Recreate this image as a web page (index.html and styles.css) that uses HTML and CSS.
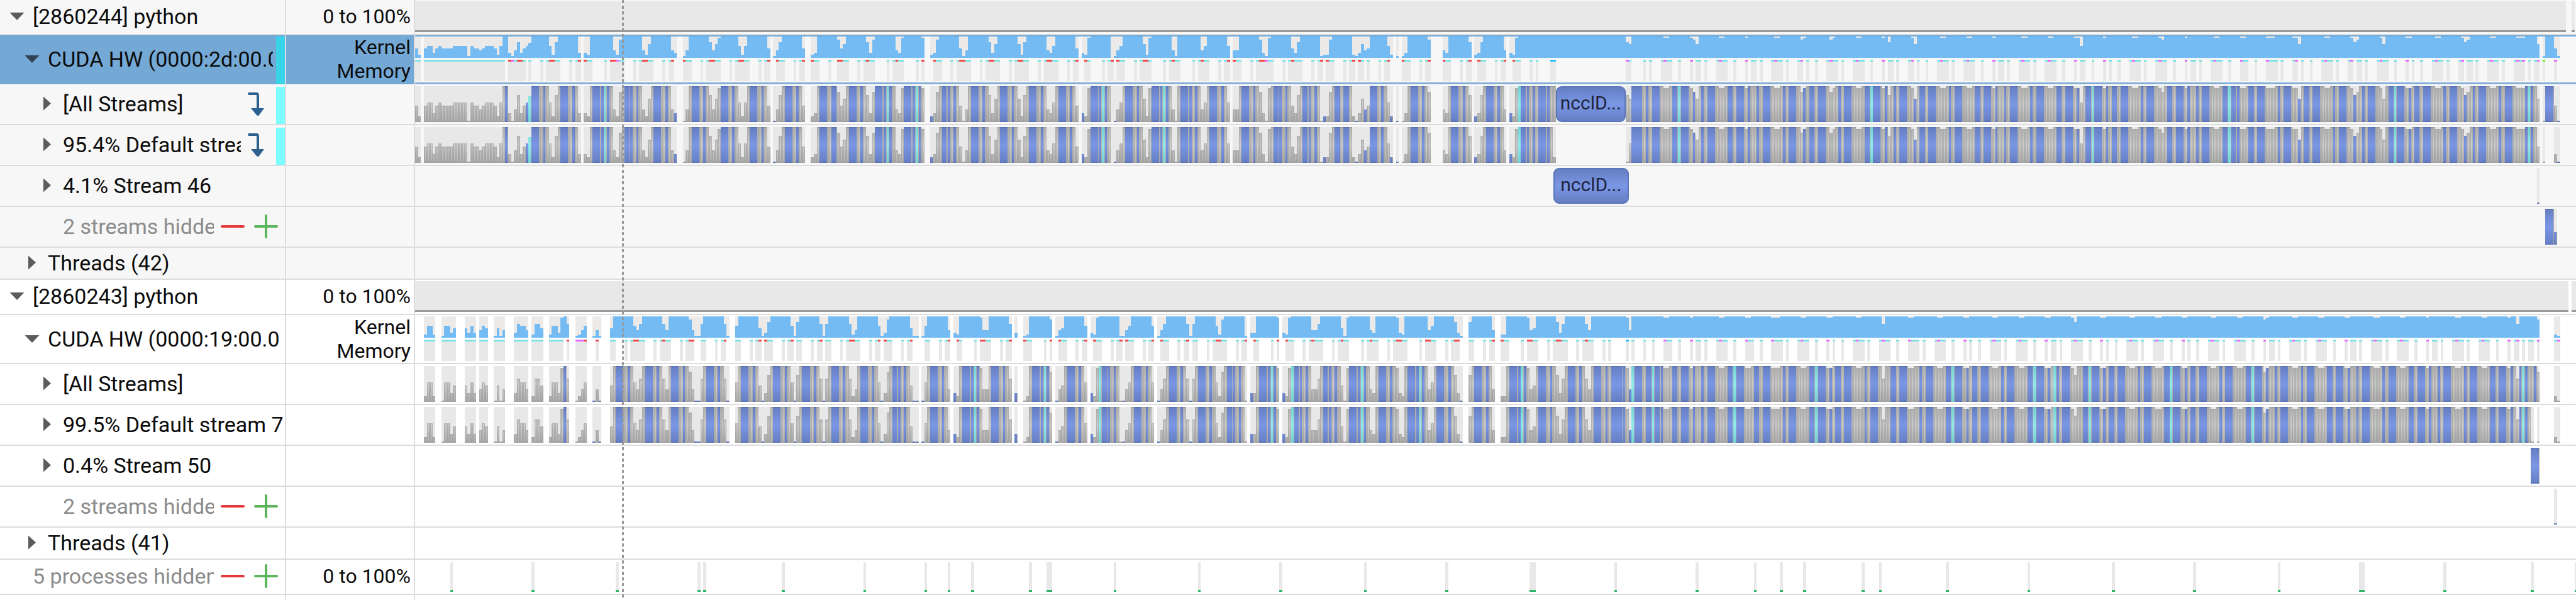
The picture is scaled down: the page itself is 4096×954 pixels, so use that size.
FILE: index.html
```html
<!DOCTYPE html>
<html lang="en">
<head>
<meta charset="utf-8">
<title>Timeline</title>
<link rel="stylesheet" href="styles.css">
</head>
<body>
<svg class="defs" width="0" height="0" aria-hidden="true">
  <defs>
    <linearGradient id="blueFill" gradientUnits="userSpaceOnUse" x1="0" y1="0" x2="0" y2="100">
      <stop offset="0" stop-color="#546eb8"/><stop offset="0.04" stop-color="#6780c4"/><stop offset="0.5" stop-color="#7a97e6"/><stop offset="0.96" stop-color="#6780c4"/><stop offset="1" stop-color="#546eb8"/>
    </linearGradient>
    <linearGradient id="grayFill" gradientUnits="userSpaceOnUse" x1="0" y1="0" x2="0" y2="100">
      <stop offset="0" stop-color="#9c9c9c"/><stop offset="0.04" stop-color="#acacac"/><stop offset="0.5" stop-color="#b4b4b4"/><stop offset="1" stop-color="#a2a2a2"/>
    </linearGradient>
    <linearGradient id="shineFill" gradientUnits="userSpaceOnUse" x1="0" y1="0" x2="0" y2="100">
      <stop offset="0" stop-color="#b0b0ae"/><stop offset="0.5" stop-color="#cdcdcb"/><stop offset="1" stop-color="#b0b0ae"/>
    </linearGradient>
    <linearGradient id="cyanFill" gradientUnits="userSpaceOnUse" x1="0" y1="0" x2="0" y2="100">
      <stop offset="0" stop-color="#72d2d2"/><stop offset="0.5" stop-color="#94eaea"/><stop offset="1" stop-color="#72d2d2"/>
    </linearGradient>
    <symbol id="hook" viewBox="0 0 26 40"><path d="M2 4H14Q16 4 16 7V29" fill="none" stroke="#2b608f" stroke-width="4" stroke-linecap="round"/><path d="M5 27H26L18 38Q16 40 14 38Z" fill="#2b608f"/></symbol>
    <symbol id="minus" viewBox="0 0 38 38"><path d="M2 19H36" stroke="#e5383b" stroke-width="4" stroke-linecap="round"/></symbol>
    <symbol id="plus" viewBox="0 0 38 38"><path d="M2 19H36M19 2V36" stroke="#5bb55b" stroke-width="4" stroke-linecap="round"/></symbol>
  </defs>
</svg>
<main class="timeline">
  <section class="process shaded">
    <div class="row short">
      <div class="name l1"><button class="caret open" aria-label="Collapse process 2860244"></button><span class="label">[2860244] python</span></div>
      <div class="value">0 to 100%</div>
      <div class="lane"><svg data-kind="usage" data-spans="0-739,741-742"></svg></div>
    </div>
    <div class="row tall selected">
      <div class="name l2"><button class="caret open" aria-label="Collapse CUDA HW"></button><span class="label">CUDA HW (0000:2d:00.0</span><span class="mark"></span></div>
      <div class="value">Kernel<br>Memory</div>
      <div class="lane"><svg data-kind="kernel" data-track="a"></svg></div>
    </div>
    <div class="row">
      <div class="name l3"><button class="caret" aria-label="Expand all streams"></button><span class="label">[All Streams]</span><svg class="hook"><use href="#hook"/></svg><span class="mark"></span></div>
      <div class="value"></div>
      <div class="lane"><svg data-kind="bars" data-track="a"></svg><div class="event in-all">ncclD...</div></div>
    </div>
    <div class="row">
      <div class="name l3"><button class="caret" aria-label="Expand default stream"></button><span class="label">95.4% Default stream</span><svg class="hook"><use href="#hook"/></svg><span class="mark"></span></div>
      <div class="value"></div>
      <div class="lane"><svg data-kind="bars" data-track="aDefault"></svg></div>
    </div>
    <div class="row">
      <div class="name l3"><button class="caret" aria-label="Expand stream 46"></button><span class="label">4.1% Stream 46</span></div>
      <div class="value"></div>
      <div class="lane"><svg data-kind="bars" data-track="a46"></svg><div class="event in-stream">ncclD...</div></div>
    </div>
    <div class="row">
      <div class="name l3 hidden-rows"><span class="label">2 streams hidden</span><button class="tool" aria-label="Show fewer"><svg><use href="#minus"/></svg></button><button class="tool" aria-label="Show more"><svg><use href="#plus"/></svg></button></div>
      <div class="value"></div>
      <div class="lane"><svg data-kind="bars" data-track="aHidden"></svg></div>
    </div>
    <div class="row threads">
      <div class="name l2"><button class="caret" aria-label="Expand threads"></button><span class="label">Threads (42)</span></div>
      <div class="value"></div>
      <div class="lane"></div>
    </div>
  </section>
  <section class="process">
    <div class="row short">
      <div class="name l1"><button class="caret open" aria-label="Collapse process 2860243"></button><span class="label">[2860243] python</span></div>
      <div class="value">0 to 100%</div>
      <div class="lane"><svg data-kind="usage" data-spans="0-740,741-743"></svg></div>
    </div>
    <div class="row tall">
      <div class="name l2"><button class="caret open" aria-label="Collapse CUDA HW"></button><span class="label">CUDA HW (0000:19:00.0</span></div>
      <div class="value">Kernel<br>Memory</div>
      <div class="lane"><svg data-kind="kernel" data-track="b"></svg></div>
    </div>
    <div class="row">
      <div class="name l3"><button class="caret" aria-label="Expand all streams"></button><span class="label">[All Streams]</span></div>
      <div class="value"></div>
      <div class="lane"><svg data-kind="bars" data-track="b"></svg></div>
    </div>
    <div class="row">
      <div class="name l3"><button class="caret" aria-label="Expand default stream"></button><span class="label">99.5% Default stream 7</span></div>
      <div class="value"></div>
      <div class="lane"><svg data-kind="bars" data-track="bDefault"></svg></div>
    </div>
    <div class="row">
      <div class="name l3"><button class="caret" aria-label="Expand stream 50"></button><span class="label">0.4% Stream 50</span></div>
      <div class="value"></div>
      <div class="lane"><svg data-kind="bars" data-track="b50"></svg></div>
    </div>
    <div class="row">
      <div class="name l3 hidden-rows"><span class="label">2 streams hidden</span><button class="tool" aria-label="Show fewer"><svg><use href="#minus"/></svg></button><button class="tool" aria-label="Show more"><svg><use href="#plus"/></svg></button></div>
      <div class="value"></div>
      <div class="lane"><svg data-kind="bars" data-track="bHidden"></svg></div>
    </div>
    <div class="row threads">
      <div class="name l2"><button class="caret" aria-label="Expand threads"></button><span class="label">Threads (41)</span></div>
      <div class="value"></div>
      <div class="lane"></div>
    </div>
    <div class="row short">
      <div class="name l1 hidden-rows"><span class="label">5 processes hidden</span><button class="tool" aria-label="Show fewer"><svg><use href="#minus"/></svg></button><button class="tool" aria-label="Show more"><svg><use href="#plus"/></svg></button></div>
      <div class="value">0 to 100%</div>
      <div class="lane"><svg data-kind="ticks"></svg></div>
    </div>
  </section>
  <div class="row tail"><div class="name"></div><div class="value"></div><div class="lane"></div></div>
  <div class="cursor"></div>
</main>
<script src="timeline.js"></script>
</body>
</html>
```
FILE: styles.css
```css
* { box-sizing: border-box; }
body { margin: 0; background: #fff; color: #0c0c0c; font-family: Roboto, "Liberation Sans", sans-serif; font-size: 34px; line-height: 40px; }
button { appearance: none; border: 0; padding: 0; background: none; cursor: pointer; }
.defs { position: absolute; }
.timeline { position: relative; display: flex; flex-direction: column; min-height: 100vh; overflow: hidden; }
.shaded { background: #f7f7f7; }
.row { display: grid; grid-template-columns: 455px 205px minmax(0, 1fr); height: 65px; border-bottom: 2px solid #dcdcdc; }
.row.short { height: 56px; }
.row.tall { height: 78px; }
.row.threads { height: 51px; }
.row.tail { flex: 1; height: auto; border-bottom: 0; }
.name, .value { border-right: 2px solid #dcdcdc; min-width: 0; }
.name { display: flex; align-items: center; gap: 13px; padding-bottom: 2px; }
.l1 { padding-left: 15px; }
.l2 { padding-left: 39px; }
.l3 { padding-left: 63px; }
.label { flex: 1; min-width: 0; overflow: hidden; white-space: nowrap; }
.caret { flex: none; display: flex; justify-content: center; width: 24px; height: 24px; align-items: center; }
.caret::before { content: ""; width: 12px; height: 22px; background: #5c5c5c; clip-path: polygon(0 0, 100% 50%, 0 100%); }
.caret.open::before { width: 23px; height: 12px; clip-path: polygon(0 0, 100% 0, 50% 100%); }
.hook { flex: none; width: 26px; height: 40px; margin-left: -2px; }
.mark { flex: none; align-self: stretch; width: 14px; margin-top: 4px; margin-bottom: -2px; background: #7dffff; }
.hook + .mark { margin-left: 6px; }
.selected .name, .selected .value { background: #74a8d5; }
.selected .label { margin-right: -8px; }
.selected .caret::before { background: #2f4355; }
.selected .mark { background: #38d3e9; margin-top: 2px; }
.hidden-rows { color: #8b8b8b; padding-right: 11px; gap: 15px; }
.hidden-rows.l1 { padding-left: 52px; }
.hidden-rows.l3 { padding-left: 100px; }
.hidden-rows .label { margin-right: -4px; }
.tool, .tool svg { display: block; flex: none; width: 38px; height: 38px; }
.value { display: flex; align-items: center; justify-content: flex-end; padding-right: 5px; padding-bottom: 2px; font-size: 32px; line-height: 38px; text-align: right; white-space: nowrap; }
.lane { position: relative; min-width: 0; padding: 3px 0; }
.lane > svg { display: block; width: 100%; height: 57px; shape-rendering: crispEdges; }
.short .lane { padding: 2px 0; }
.short .lane > svg { height: 49px; }
.tall .lane { padding: 2px 0 3px; }
.tall .lane > svg { height: 71px; }
.selected .lane { box-shadow: inset 0 2px #6faadc, inset 0 -3px #84b0d8; }
.event { position: absolute; top: 3px; height: 57px; border: 2px solid #5c76bd; border-radius: 9px; background: linear-gradient(#667fc2, #7a97e6 50%, #667fc2); color: #20243c; font-size: 30px; line-height: 50px; text-align: center; white-space: nowrap; overflow: hidden; }
.in-all { left: 52.79%; width: 3.23%; }
.in-stream { left: 52.67%; width: 3.5%; }
.cursor { position: absolute; top: 0; bottom: 0; left: calc(660px + (100% - 660px) * 0.0958); width: 3px; background: repeating-linear-gradient(#999 0 5px, transparent 5px 9px); }
```
FILE: timeline.js
```js
// One character per time bin: B/G/C full blue, gray, cyan; H blue then gray;
// N labelled event; K short cyan; 0-9 gray height; a-j blue height; _ idle; . nothing.
const TRACKS = {
  a: [
    [0, "41.4552454444555550544345554" + "15GB203724fK", "cc.cccccccccccccccccccccccccccc.rmcrrc.c"],
    [40, "BBHGBG517G", "...c.crrcc"],
    [50, "BBHGBG2.21GBBHBCBG318GBHBGBG316GBBHGBG3c..03GBBHGBG7369BBHGBG515G", "...c.cr.rcc....c.rrmcc...c.crrcc...c.cr...rcc...c.crrcc...c.crrcc"],
    [115, "BBHGBG4.a37G", "...c.cr..rcc"], [127, "BBHGBG4..12G", "...c.cr..rcc"],
    [139, "BBHGBB846G", "...c..rrcc"], [149, "BBHGBG728", "...c.crcc"], [158, "BBHBCBG329", "....c.crcc"],
    [168, "BBHBCB9..b28G", "....c.r...rcc"], [181, "BHBGBG403G", "...c.crrcc"], [191, "BBHGBG726G", "...c.crrcc"],
    [201, "BBHGBG617G", "...c.crrcc"], [211, "BBHGBG325G", "...c.crrcc"], [221, "BBHGBG4.c19", "...c.cr..rc"],
    [232, "BBHBCBG_a35G", "....c.cr.rcc"], [244, "BBHGBG619", "...c.crrc"], [253, "BBHBCBG30G", "....c.crcc"],
    [263, "BBHBGBG35G", "....c.crcc"], [273, "BBHGBG", "...c.c"], [279, "5.33G", "r.rcc"],
    [284, "BBHGBG8209G", "...c.crrmcc"], [295, "BHBGBG427G", "...c.crccc"], [305, "BHBGBG0b18G", "...c.cr.rcc"],
    [316, "BBGBBG1a26d4", "...c.cr.rc.c"], [328, "BBHGBG5b.a.02G", "...c.cr....rcc"], [342, "BBHGBG8....32G", "...c.cr....rcc"],
    [356, "BBHGBG7.b27G", "...c.cr..rcc"], [368, "BBHGBG3.c19C", "...c.cr..rcc"], [380, "BHBGBGBBHBGG", "...c.c....bb"],
    [392, "NNNNNNNNNNNNNNNNNNNNNNNN", ""], [416, "76BBBHGBGBBHG99GBBC", "mc....c.c...cmcc..c"],
    [435, "BBH9i6GBG", "...m.cc.c"], [444, "BBHG99GBBG", "...cmcc..c"], [454, "BBH9BGGBG", "...m.cc.c"],
    [463, "BBHG99GBG", "...cmcc.c"], [472, "BBHG8jGBBG", "...cm.c..c"], [482, "BBHG89GBG", "...cmcc.c"],
    [491, "BBHG99GBBC", "...cmcc..c"], [501, "BBH9B7GBG", "...m.cc.c"], [510, "BBHG9gGBBG", "...cm.c..c"],
    [520, "BBHG99GBG", "...cmcc.c"], [529, "BBHG99GBBG", "...cmcc..c"], [539, "BBH9BGGBG", "...m.cc.c"],
    [548, "BBHG99GBG", "...cmcc.c"], [557, "BBHG99GBBG", "...cmcc..c"], [567, "BBH9j5GBBC", "...m.cc..c"],
    [577, "BBH9BGBBG", "...m.c..c"], [586, "BBHG99GBG", "...cmcc.c"], [595, "BBHG98GBBG", "...cmcc..c"],
    [605, "BBH9BGGBG", "...m.cc.c"], [614, "BBHG99GBBC", "...cmcc..c"], [624, "BHB99GBBG", "...mcc..c"],
    [633, "BBH999GBG", "...mccc.c"], [642, "BBH99gGBBG", "...cm.c..c"], [652, "BBHG99GBG", "...cmcc.c"],
    [661, "BBHG9h8GBG", "...cm.cc.c"], [671, "BBHG96GBBC", "...cmcc..c"], [681, "BBH9jGBBG", "...m.c..c"],
    [690, "BBHG99GBG", "...cmcc.c"], [699, "BBHG9h8GBG", "...cm.cc.c"], [709, "BBHG99GBG", "...cmcc.c"],
    [718, "BBHG999BCBG6.0BBB4a", "...cmcm.c.cm.g...m."]
  ],
  b: [
    [0, "...1551..05524...4252.354..0403...26553.1664..15529B6..0135..a3a...4G", "...cccc..ccccc...cccc.ccc..cccc...ccccc.cccc..ccccc.r..mmmr...r....cc"],
    [69, "BBHGBG536G", "...c.crrcc"], [79, "BBHGBG63G", "...c.crcc"], [88, "BBHGBG83aa6G", "...c.crr..cc"],
    [100, "BBHGBG6a..5G", "...c.cr...cc"], [112, "BBHGBG4a27G", "...c.cr.rcc"], [123, "BBHGBG5a7G", "...c.cr.cc"],
    [133, "BBHGBG6a6G", "...c.cr.cc"], [143, "BBHGBG613G", "...c.crrcc"], [153, "BBHGBG5a28G", "...c.cr.rcc"],
    [164, "BHBGBG4aa.a5G", "...c.cr....cc"], [177, "BBHGBG3.c1G", "...c.cr..rc"], [188, "BBHBCB933G", "....c.rrcc"],
    [198, "BBHGBG6.c..01G", "...c.cr....rcc"], [212, "BBHBCB8.a34G", "....c.r..rcc"], [224, "BBHGBG5.c19C", "...c.cr..rcc"],
    [236, "BHBGBG0a35G", "...c.cr.rcc"], [247, "BBHGBG5.a36G", "...c.cr..rcc"], [259, "BBHGBG6a6G", "...c.cr.cc"],
    [269, "BBHGBG518G", "...c.crrcc"], [279, "BHBGBG0.c2G", "...c.cr..rc"], [290, "BBHBCB9.c19C", "....c.r..rcc"],
    [302, "BHBGBG336G", "...c.crccc"], [312, "BHBGBG409", "...c.crcc"], [321, "BBHBCBG32G", "....c.crcc"],
    [331, "BBHGBG921G", "...c.crrcc"], [341, "BBHBCBG35G", "....c.rrcc"], [351, "BBHGBG72a..7G", "...c.crr...cc"],
    [364, "BBHGBG3..11G", "...c.cr..rcc"], [376, "BBHBCB934G", "....c.rrcc"], [386, "BBHGBG726G", "...c.crrcc"],
    [396, "BBHGBG63G", "...c.crcc"], [405, "BBHGBG", "...c.c"], [411, "BBBHB9dC", ".....b.c"], [419, "BBHGBBC", "...c..c"],
    [426, "BHB99GBBG", "...mcc..c"], [435, "BBH9BGGBG", "...m.cc.c"], [444, "BBHG99GBBC", "...cmcc..c"],
    [454, "BBH99GBBG", "...mcc..c"], [463, "BBH999GBG", "...mccc.c"], [472, "BBHG99GBBC", "...cmcc..c"],
    [482, "BBH9jGBBG", "...m.c..c"], [491, "BBHG99GBG", "...cmcc.c"], [500, "BBHG6GGBBG", "...cmcc..c"],
    [510, "BBH99GGBG", "...mccc.c"], [519, "BBHG99GBBC", "...cmcc..c"], [529, "BBH9jGBBG", "...m.c..c"],
    [538, "BBHG99GBG", "...cmcc.c"], [547, "BBHG99GBBC", "...cmcc..c"], [557, "BBH9jGCBG", "...m.cc.c"],
    [566, "BBH97GGBBC", "...cmcc..c"], [576, "BBH9jGBBG", "...m.c..c"], [585, "BBHG99GBG", "...cmcc.c"],
    [594, "BBHG99GBBC", "...cmcc..c"], [604, "BBH9jGBBG", "...m.c..c"], [613, "BBHG99GBG", "...cmcc.c"],
    [622, "BBHG99GBBC", "...cmcc..c"], [632, "BBH8jGGBG", "...m.cc.c"], [641, "BBHG99GBG", "...cmcc.c"],
    [650, "BBHG99GBBG", "...cmcc..c"], [660, "BBH9jGGBG", "...m.cc.c"], [669, "BBHG99GBG", "...cmcc.c"],
    [678, "BBHG99GBBG", "...cmcc..c"], [688, "BBH9BGGBG", "...m.cc.c"], [697, "BBHG99GBG", "...cmcc.c"],
    [706, "BBHG99GBBG", "...cmcc..c"], [716, "BBH9BG6BCBGGB8.....10", "...m.cm.c.cc.m.....cm"]
  ],
  a46: [[729, "a", ""]],
  aHidden: [[732, "BBBd", ""]],
  b50: [[727, "BBB", ""]],
  bHidden: [[735, "a", ""]]
};
TRACKS.aDefault = TRACKS.a.concat([[391, "1........................05", ""], [729, "4.0...2a", ""]]);
TRACKS.bDefault = TRACKS.b.concat([[727, "0.0", ""]]);

const BINS = 742.5;
const TICKS = [12, 40, 69, 97, 99, 126, 154, 175, 183, 191, 211, 217, 218, 240, 269, 297, 326, 354, 383, 384, 412, 440, 460, 469, 477, 497, 503, 526, 554, 583, 611, 640, 668, 669, 697, 727, 742];
const MEMORY = { c: "#7fe3e5", r: "#f4474a", m: "#e86bff", b: "#2cc0ff", g: "#6af01c" };
const IDLE = "#e8e8e8";

function expand(track, column) {
  const out = new Array(744).fill(".");
  for (const part of TRACKS[track]) {
    [...part[column]].forEach((ch, i) => { out[part[0] + i] = ch; });
  }
  return out;
}

function level(ch) {
  if (ch === ".") return -1;
  if (ch === "_") return 0;
  if (ch === "K") return 0.72;
  if ("BGCHN".includes(ch)) return 1;
  const n = /\d/.test(ch) ? Number(ch) : ch.charCodeAt(0) - 97;
  return n === 0 ? 0.04 : n / 10 + 0.05;
}

class Layers {
  constructor() { this.paths = new Map(); }
  add(fill, x, y, w, h) {
    const p = this.paths.get(fill) || "";
    this.paths.set(fill, p + `M${x.toFixed(2)} ${y.toFixed(1)}h${w.toFixed(2)}v${h.toFixed(1)}h${(-w).toFixed(2)}z`);
  }
  render(svg, height) {
    svg.setAttribute("viewBox", `0 0 ${BINS} ${height}`);
    svg.setAttribute("preserveAspectRatio", "none");
    svg.innerHTML = [...this.paths].map(([fill, d]) => `<path fill="${fill}" d="${d}"/>`).join("");
  }
}

function drawBars(svg) {
  const bins = expand(svg.dataset.track, 1);
  const layers = new Layers();
  bins.forEach((ch, i) => { if (ch !== "." && ch !== "N") layers.add(IDLE, i, 0, 1, 100); });
  bins.forEach((ch, i) => {
    const h = level(ch) * 100;
    if (h <= 0 || ch === "N") return;
    const y = 100 - h;
    layers.add("url(#grayFill)", i, y, 1, h);
    if (/[G\d]/.test(ch)) layers.add("url(#shineFill)", i + 0.35, y + 3, 0.4, Math.max(h - 6, 0));
    if (ch === "B") layers.add("url(#blueFill)", i, y, /[BH]/.test(bins[i + 1]) ? 1 : 0.8, h);
    if (ch === "H") layers.add("url(#blueFill)", i, y, 0.6, h);
    if (/[a-j]/.test(ch)) layers.add("url(#blueFill)", i, y, 0.85, h);
    if ("CK".includes(ch)) layers.add("url(#cyanFill)", i, y, 0.8, h);
  });
  layers.render(svg, 100);
}

function drawKernel(svg) {
  const layers = new Layers();
  expand(svg.dataset.track, 1).forEach((ch, i) => {
    const h = level(ch);
    if (h < 0) return;
    layers.add("#eceae8", i, 0, 1, 34);
    const k = h === 0 ? 0 : Math.max(h * 34, 3);
    layers.add("#73bbf2", i, 34 - k, 1, k);
  });
  expand(svg.dataset.track, 2).forEach((ch, i) => {
    if (ch === ".") return;
    layers.add(IDLE, i, 40, 1, 31);
    layers.add(MEMORY[ch], i, 37, 1, 3);
  });
  layers.render(svg, 71);
}

function drawUsage(svg) {
  const layers = new Layers();
  for (const span of svg.dataset.spans.split(",")) {
    const [from, to] = span.split("-").map(Number);
    layers.add(IDLE, from, 0, to - from, 46);
    layers.add("#9a9a9a", from, 46, to - from, 3);
  }
  layers.render(svg, 49);
}

function drawTicks(svg) {
  const layers = new Layers();
  for (const bin of TICKS) {
    layers.add(IDLE, bin, 2, 1, 44);
    layers.add("#2db56a", bin, 46, 1, 3);
  }
  layers.render(svg, 49);
}

const DRAW = { bars: drawBars, kernel: drawKernel, usage: drawUsage, ticks: drawTicks };
document.querySelectorAll("svg[data-kind]").forEach((svg) => DRAW[svg.dataset.kind](svg));
```
